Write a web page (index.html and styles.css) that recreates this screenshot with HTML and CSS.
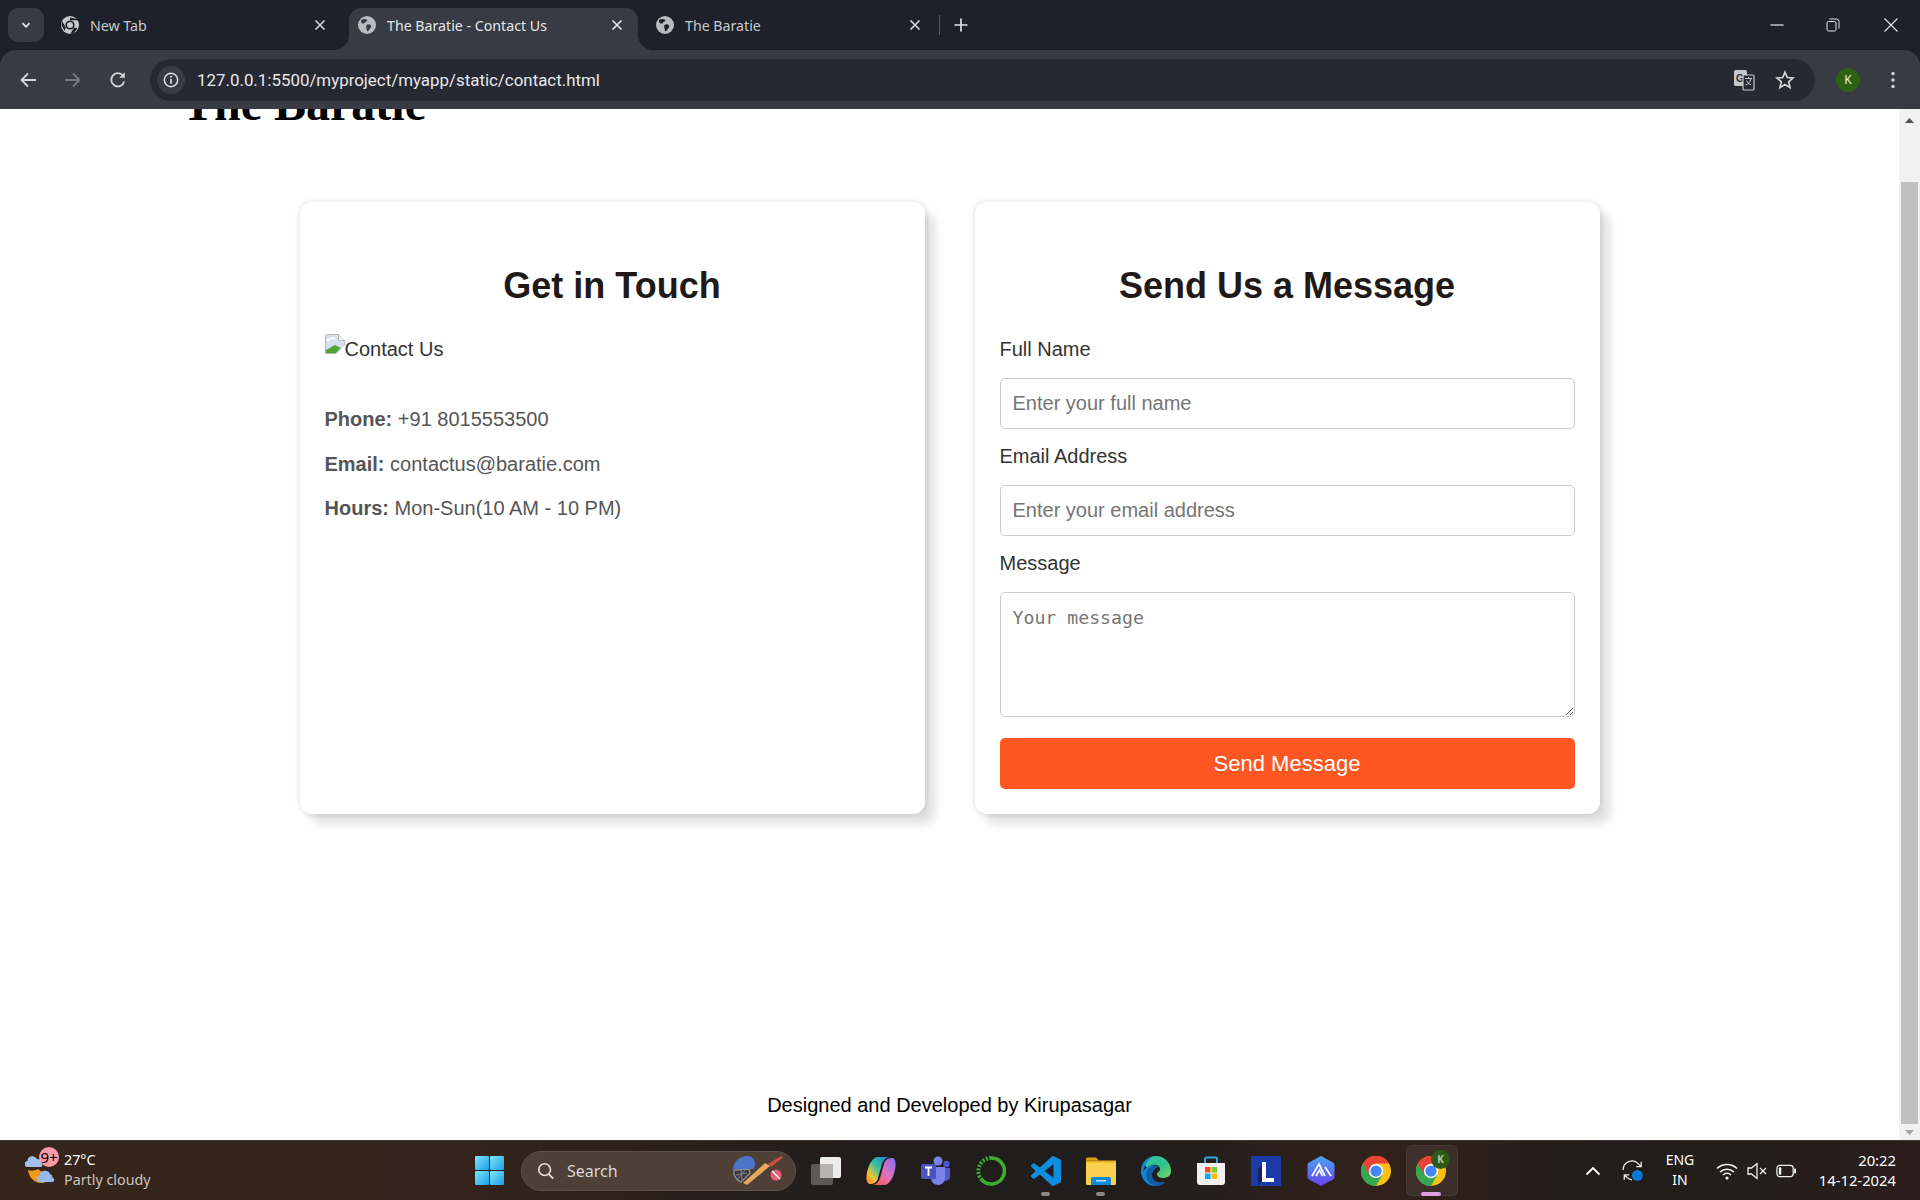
FILE: index.html
```html
<!DOCTYPE html>
<html lang="en">
<head>
<meta charset="utf-8">
<title>The Baratie - Contact Us</title>
<link rel="stylesheet" href="styles.css">
</head>
<body>
<div class="app">
  <header class="tabstrip">
    <div class="tab-search"><svg class="i12" viewBox="0 0 12 12"><path d="M2.5 4.2 6 7.8l3.5-3.6" fill="none" stroke="#e3e3e6" stroke-width="1.8"/></svg></div>
    <div class="tab">
      <svg class="favicon" viewBox="0 0 18 18"><circle cx="9" cy="9" r="9" fill="#c7c8cb"/><circle cx="9" cy="9" r="4.6" fill="#1e212a"/><circle cx="9" cy="9" r="3" fill="#c7c8cb"/><path d="M9 4.2h8L15.5 3 9 1.5zM4.8 11.4 1 5l-.6 4L3.6 15zM13.2 11.4 9.2 18l3.6-.8 3.6-5z" fill="#1e212a"/></svg>
      <span class="tab-title">New Tab</span>
      <svg class="tab-close" viewBox="0 0 12 12"><path d="M1.5 1.5l9 9M10.5 1.5l-9 9" stroke="#d8d9dc" stroke-width="1.6"/></svg>
    </div>
    <div class="tab active">
      <svg class="favicon" viewBox="0 0 18 18"><circle cx="9" cy="9" r="9" fill="#b9bbc0"/><path d="M3.2 3.8c2-.9 4.2-1 5.8 0 .8 1-.4 2.100-1.800 2.500-.6 1.200-1.800 1.500-2.900 1.200C3.300 6.800 2.500 5.500 3.200 3.800zM9.500 8.500c1.600-.5 3.200.2 3.700 1.500.4 1.500-.9 2.300-1.700 3.300-.5 1.400-1.600 2.300-2.500 1.600-.5-1.300-.2-2.400-.8-3.600-.3-1.100 0-2.200 1.300-2.800z" fill="#3a3d46"/></svg>
      <span class="tab-title">The Baratie - Contact Us</span>
      <svg class="tab-close" viewBox="0 0 12 12"><path d="M1.5 1.500l9 9M10.500 1.500l-9 9" stroke="#e6e7ea" stroke-width="1.600"/></svg>
    </div>
    <div class="tab">
      <svg class="favicon" viewBox="0 0 18 18"><circle cx="9" cy="9" r="9" fill="#b9bbc0"/><path d="M3.200 3.800c2-.9 4.200-1 5.800 0 .8 1-.4 2.100-1.800 2.500-.6 1.200-1.800 1.500-2.900 1.200C3.300 6.800 2.500 5.500 3.200 3.800zM9.500 8.500c1.600-.5 3.200.2 3.700 1.500.4 1.500-.9 2.300-1.700 3.300-.5 1.400-1.600 2.300-2.500 1.600-.5-1.300-.2-2.400-.8-3.600-.3-1.100 0-2.200 1.300-2.800z" fill="#1e212a"/></svg>
      <span class="tab-title">The Baratie</span>
      <svg class="tab-close" viewBox="0 0 12 12"><path d="M1.500 1.500l9 9M10.500 1.500l-9 9" stroke="#d8d9dc" stroke-width="1.600"/></svg>
    </div>
    <span class="tab-sep"></span>
    <svg class="new-tab" viewBox="0 0 14 14"><path d="M7 0.500v13M0.500 7h13" stroke="#e3e3e6" stroke-width="1.700"/></svg>
    <div class="win-controls">
      <svg class="win-min" viewBox="0 0 14 14"><path d="M0.500 7h13" stroke="#e6e6e8" stroke-width="1.200"/></svg>
      <svg class="win-max" viewBox="0 0 14 14"><rect x="1" y="3.500" width="9" height="9.500" rx="1.500" fill="none" stroke="#e6e6e8"/><path d="M3.500 1h7a2.500 2.500 0 0 1 2.500 2.500v7" fill="none" stroke="#e6e6e8"/></svg>
      <svg class="win-close" viewBox="0 0 14 14"><path d="M0.500 0.500l13 13M13.500 0.500l-13 13" stroke="#e6e6e8" stroke-width="1.100"/></svg>
    </div>
  </header>

  <nav class="toolbar">
    <svg class="nav-icon" viewBox="0 0 18 18"><path d="M17 9H2.500M9 2.500 2.500 9 9 15.500" fill="none" stroke="#d4d5d8" stroke-width="1.800"/></svg>
    <svg class="nav-icon" viewBox="0 0 18 18"><path d="M1 9h14.500M9 2.500 15.500 9 9 15.500" fill="none" stroke="#777980" stroke-width="1.800"/></svg>
    <svg class="nav-icon" viewBox="0 0 18 18"><path d="M15.200 10.500A6.600 6.600 0 1 1 14 4.700" fill="none" stroke="#d4d5d8" stroke-width="1.800"/><path d="M15.800 1.200v5.600h-5.600z" fill="#d4d5d8"/></svg>
    <div class="omnibox">
      <div class="info-chip"><svg class="i18" viewBox="0 0 18 18"><circle cx="9" cy="9" r="7.500" fill="none" stroke="#e3e3e6" stroke-width="1.600"/><path d="M9 8v5.200" stroke="#e3e3e6" stroke-width="1.800"/><circle cx="9" cy="5.400" r="1.100" fill="#e3e3e6"/></svg></div>
      <span class="url">127.0.0.1:5500/myproject/myapp/static/contact.html</span>
      <svg class="translate" viewBox="0 0 22 22"><rect x="1" y="1" width="13" height="16" rx="1.500" fill="#c6c7ca"/><text x="3" y="13" class="translate-g">G</text><rect x="10" y="6" width="11" height="15" rx="1" fill="#262932" stroke="#c6c7ca" stroke-width="1.200"/><path d="M12 9.500h7M15.500 8v1.500M18 10c-.8 3-2.800 5-5.500 6M13.500 11.500c1 2 2.500 3.500 4.500 4.500" fill="none" stroke="#c6c7ca"/></svg>
      <svg class="star" viewBox="0 0 20 20"><path d="M10 2.200l2.300 5.300 5.700.5-4.300 3.800 1.300 5.700L10 14.500l-5 3 1.300-5.700L2 8l5.700-.5z" fill="none" stroke="#d4d5d8" stroke-width="1.700"/></svg>
    </div>
    <div class="avatar">K</div>
    <svg class="menu" viewBox="0 0 4 18"><circle cx="2" cy="2.500" r="1.700" fill="#d4d5d8"/><circle cx="2" cy="9" r="1.700" fill="#d4d5d8"/><circle cx="2" cy="15.500" r="1.700" fill="#d4d5d8"/></svg>
  </nav>

  <div class="viewport">
    <div class="page">
      <h1 class="brand">The Baratie</h1>
      <main class="cards">
        <section class="card">
          <h2 class="card-title">Get in Touch</h2>
          <div class="alt-img">
            <svg class="broken" viewBox="0 0 20 20"><path d="M0.500 2.500a2 2 0 0 1 2-2h11l6 6V19.500H0.500z" fill="#d5e1f3" stroke="#b4b4b4"/><path d="M13.500 0.500v6h6" fill="#f4f4f4" stroke="#b4b4b4"/><path d="M1 19V16L10 11l6 3-5 5z" fill="#52a535"/><path d="M20 20H11l9-9z" fill="#fff"/><path d="M2.500 7c1.500-2.500 5-3.500 8-2" fill="none" stroke="#fff" stroke-width="2"/></svg>
            <span>Contact Us</span>
          </div>
          <p class="info"><strong>Phone:</strong> +91 8015553500</p>
          <p class="info"><strong>Email:</strong> contactus@baratie.com</p>
          <p class="info"><strong>Hours:</strong> Mon-Sun(10 AM - 10 PM)</p>
        </section>
        <section class="card">
          <h2 class="card-title">Send Us a Message</h2>
          <form class="form">
            <label class="field-label" for="name">Full Name</label>
            <input class="field" id="name" type="text" placeholder="Enter your full name">
            <label class="field-label" for="email">Email Address</label>
            <input class="field" id="email" type="email" placeholder="Enter your email address">
            <label class="field-label" for="message">Message</label>
            <textarea class="field area" id="message" placeholder="Your message"></textarea>
            <button class="send" type="button">Send Message</button>
          </form>
        </section>
      </main>
      <footer class="foot">Designed and Developed by Kirupasagar</footer>
    </div>
    <div class="scrollbar">
      <svg class="sb-arrow" viewBox="0 0 9 5"><path d="M4.500 0 9 5H0z" fill="#505050"/></svg>
      <div class="sb-thumb"></div>
      <svg class="sb-arrow" viewBox="0 0 9 5"><path d="M4.500 5 9 0H0z" fill="#a3a3a3"/></svg>
    </div>
  </div>

  <footer class="taskbar">
    <div class="weather">
      <div class="wx-icon">
        <svg class="wx-svg" viewBox="0 0 30 28"><path d="M3 15C4 23 10 28 16 28c4 0 7-2 9-5L13 14c-3 2-7 2-10 1z" fill="#f09a1e"/><path d="M3 12a3 3 0 0 1-.5-6 5 5 0 0 1 9.500-2 3.500 3.500 0 0 1 4 4 2.200 2.200 0 0 1 0 4z" fill="#a3bff0"/><path d="M15 27a3 3 0 0 1-.5-6 5.500 5.500 0 0 1 10.500-2 3.500 3.500 0 0 1 2.500 3.500 2.500 2.500 0 0 1 .5 4.500z" fill="#94b9ef"/></svg>
        <span class="wx-badge">9+</span>
      </div>
      <div class="wx-text"><span class="wx-temp">27°C</span><span class="wx-desc">Partly cloudy</span></div>
    </div>
    <svg class="start" viewBox="0 0 29 29"><defs><linearGradient id="w" x1="0" y1="0" x2="1" y2="1"><stop offset="0" stop-color="#7de6fb"/><stop offset="1" stop-color="#1a9fe8"/></linearGradient></defs><rect width="14" height="14" rx="1" fill="url(#w)"/><rect x="15" width="14" height="14" rx="1" fill="url(#w)"/><rect y="15" width="14" height="14" rx="1" fill="url(#w)"/><rect x="15" y="15" width="14" height="14" rx="1" fill="url(#w)"/></svg>
    <div class="search">
      <svg class="search-glass" viewBox="0 0 20 20"><circle cx="8.500" cy="8.500" r="6.500" fill="none" stroke="#e4e0dc" stroke-width="1.800"/><path d="M13 13.500l5 5" stroke="#e4e0dc" stroke-width="2"/></svg>
      <span class="search-text">Search</span>
      <svg class="search-art" viewBox="0 0 51 29"><path d="M2 14c-1 5 2 10 7 12l9-9-1-4z" fill="#3b3a3c" stroke="#8d939c" stroke-width="1.300"/><path d="M4 19l11-2M6 23l7-9M9 14l1 10" stroke="#8d939c" stroke-width=".8"/><path d="M1 13C2 5 8 0 15 0c5 0 8 3 8 8l-1 5z" fill="#4a74c9"/><path d="M11 27l4 2 23-19-5-3z" fill="#e8a860"/><path d="M36 8 49 0l2 1.500L39 11z" fill="#c94f3d"/><circle cx="44" cy="19" r="5.500" fill="#ea5f74"/><path d="M40 15l8 8" stroke="#fff" stroke-width="1.300"/></svg>
    </div>
    <div class="apps">
      <div class="app-icon"><svg class="app-svg" viewBox="0 0 30 30"><rect x="9" y="1" width="21" height="21" rx="2" fill="#ececec"/><rect x="0" y="8" width="22" height="21" rx="2" fill="#66645f" fill-opacity=".85"/><rect x="9" y="8" width="13" height="14" fill="#b5b3b0"/></svg></div>
      <div class="app-icon"><svg class="app-svg" viewBox="0 0 30 30"><defs><linearGradient id="cp1" x1="1" y1="0" x2="0" y2="1"><stop offset="0" stop-color="#1a7fe0"/><stop offset=".45" stop-color="#35c0a0"/><stop offset=".75" stop-color="#f7c32e"/><stop offset="1" stop-color="#f4783b"/></linearGradient><linearGradient id="cp2" x1="1" y1="0" x2="0" y2="1"><stop offset="0" stop-color="#7f6ff0"/><stop offset=".5" stop-color="#e36fc0"/><stop offset="1" stop-color="#f4553b"/></linearGradient></defs><path d="M12 1H23C19 2 17 5 16 8L12 22C11 26 8 28 4 28 1 28 0 24 .5 20 1 14 3 9 5 6 7 3 9 1 12 1z" fill="url(#cp1)"/><path d="M18 29H7C11 28 13 25 14 22L18 8C19 4 22 2 26 2 29 2 30 6 29.5 10 29 16 27 21 25 24 23 27 21 29 18 29z" fill="url(#cp2)"/></svg></div>
      <div class="app-icon"><svg class="app-svg" viewBox="0 0 30 30"><circle cx="17" cy="5" r="4.500" fill="#7b83eb"/><circle cx="25.500" cy="8" r="3.200" fill="#5059c9"/><path d="M21 12h8v9a5 5 0 0 1-8 3z" fill="#5059c9"/><path d="M10 11h14v11a7 7 0 0 1-14 0z" fill="#7b83eb"/><rect x="0" y="8" width="15" height="15" rx="1.500" fill="#4b53bc"/><path d="M4 11.500h7M7.500 11.500v8.500" stroke="#fff" stroke-width="1.800"/></svg></div>
      <div class="app-icon"><svg class="app-svg" viewBox="0 0 30 30"><path d="M15 2a13 13 0 1 1-9 22" fill="none" stroke="#3cae2c" stroke-width="3.600"/><path d="M6 24A13 13 0 0 1 15 2" fill="none" stroke="#3cae2c" stroke-width="4" stroke-dasharray="2 1.500"/></svg></div>
      <div class="app-icon"><svg class="app-svg" viewBox="0 0 24 24"><path d="M23.150 2.587 18.210.21a1.494 1.494 0 0 0-1.705.29l-9.460 8.630-4.120-3.128a.999.999 0 0 0-1.276.057L.327 7.261A1 1 0 0 0 .326 8.740L3.899 12 .326 15.260a1 1 0 0 0 .001 1.479L1.650 17.940a.999.999 0 0 0 1.276.057l4.120-3.128 9.460 8.630a1.492 1.492 0 0 0 1.704.29l4.942-2.377A1.500 1.500 0 0 0 24 20.060V3.939a1.500 1.500 0 0 0-.85-1.352zm-5.146 14.861L10.826 12l7.178-5.448v10.896z" fill="#0e8ee0"/></svg><span class="running"></span></div>
      <div class="app-icon"><svg class="app-svg" viewBox="0 0 30 30"><path d="M0 3a1.500 1.500 0 0 1 1.500-1.500H10l3 3H0z" fill="#dfa00f"/><rect x="0" y="5" width="30" height="24" rx="1.500" fill="#fbd04f"/><rect x="0" y="4.500" width="30" height="2" fill="#e9b01c"/><path d="M5 29v-6a2 2 0 0 1 2-2h16a2 2 0 0 1 2 2v6z" fill="#0f8ad8"/><rect x="10" y="24" width="10" height="1.500" fill="#bfe0f5"/></svg><span class="running"></span></div>
      <div class="app-icon"><svg class="app-svg" viewBox="0 0 30 30"><defs><linearGradient id="ed" x1="0" y1="0" x2="1" y2="1"><stop offset="0" stop-color="#34c6a0"/><stop offset=".55" stop-color="#2fc28e"/><stop offset="1" stop-color="#7dd957"/></linearGradient></defs><path d="M15 0a15 15 0 0 1 15 15c0 5-4 7-8 7-3 0-5-1-6-3-1-3 4-3 3-7-1-3-5-4-8-3C6 11 4 14 4 5 7 2 11 0 15 0z" fill="url(#ed)"/><path d="M15 0C6 0 0 7 0 15c0 8 6 15 14 15 4 0 7-1 10-4-6 2-13 0-13-7 0-4 3-7 6-8-3-3-12-2-15 5C4 7 9 0 15 0z" fill="#1087d6"/><path d="M17 11c-4 1-6 4-6 8 0 7 7 9 13 7-4 4-9 5-12 3-6-3-8-9-6-14 3-5 8-6 11-4z" fill="#0f5ba6"/></svg></div>
      <div class="app-icon"><svg class="app-svg" viewBox="0 0 30 30"><path d="M9 8V3a1.500 1.500 0 0 1 1.500-1.500h9A1.500 1.500 0 0 1 21 3v5" fill="none" stroke="#2ea7e0" stroke-width="2"/><path d="M1 7h28v19a3 3 0 0 1-3 3H4a3 3 0 0 1-3-3z" fill="#f0f0f0"/><rect x="9" y="11" width="5.500" height="5.500" fill="#f1511b"/><rect x="15.500" y="11" width="5.500" height="5.500" fill="#80cc28"/><rect x="9" y="17.500" width="5.500" height="5.500" fill="#00adef"/><rect x="15.500" y="17.500" width="5.500" height="5.500" fill="#fbbc09"/></svg></div>
      <div class="app-icon"><svg class="app-svg" viewBox="0 0 30 30"><rect width="30" height="30" fill="#1c3aa8"/><path d="M11 9v16L7 30V13z" fill="#13245f"/><path d="M11 6h4v16h8v4H11z" fill="#fff"/></svg></div>
      <div class="app-icon"><svg class="app-svg" viewBox="0 0 30 30"><defs><linearGradient id="hx" x1="0" y1="0" x2="0" y2="1"><stop offset="0" stop-color="#4aa6f0"/><stop offset="1" stop-color="#6a3ff0"/></linearGradient></defs><path d="M15 0 27 6.500c.8.5 1.500 1.500 1.500 2.500v12c0 1-.7 2-1.500 2.500L15 30 3 23.500C2.200 23 1.500 22 1.500 21V9C1.500 8 2.200 7 3 6.500z" fill="url(#hx)"/><path d="M6 20 13 8l6 12M19 11l6 9M10 20l3.500-6 3 6" fill="none" stroke="#fff" stroke-width="1.700"/></svg></div>
      <div class="app-icon"><svg class="app-svg" viewBox="0 0 48 48"><circle cx="24" cy="24" r="24" fill="#fbc116"/><path d="M3.200 12A24 24 0 0 0 24 48L34.400 30 24 24z" fill="#35a853"/><path d="M3.200 12A24 24 0 0 1 44.800 12H24L13.600 30z" fill="#ea4335"/><circle cx="24" cy="24" r="11.500" fill="#fff"/><circle cx="24" cy="24" r="9" fill="#4285f4"/></svg></div>
      <div class="app-icon active-app"><svg class="app-svg" viewBox="0 0 48 48"><circle cx="24" cy="24" r="24" fill="#fbc116"/><path d="M3.200 12A24 24 0 0 0 24 48L34.400 30 24 24z" fill="#35a853"/><path d="M3.200 12A24 24 0 0 1 44.800 12H24L13.600 30z" fill="#ea4335"/><circle cx="24" cy="24" r="11.500" fill="#fff"/><circle cx="24" cy="24" r="9" fill="#4285f4"/></svg><span class="profile-badge">K</span><span class="running pink"></span></div>
    </div>
    <div class="tray">
      <svg class="t-caret" viewBox="0 0 16 10"><path d="M1.500 8.500 8 2l6.500 6.500" fill="none" stroke="#fff" stroke-width="1.800"/></svg>
      <svg class="t-sync" viewBox="0 0 22 22"><path d="M2 10A8 8 0 0 1 16 4.500L18.500 7M18.500 2.500V7H14" fill="none" stroke="#e8e8e8" stroke-width="1.200"/><path d="M3 14.500 5.500 17A8 8 0 0 0 10 19M3 19v-4.500h4.500" fill="none" stroke="#e8e8e8" stroke-width="1.200"/><circle cx="15" cy="15" r="5" fill="#0a78d6"/></svg>
      <div class="t-lang"><span>ENG</span><span>IN</span></div>
      <svg class="t-wifi" viewBox="0 0 22 18"><path d="M1 6.500a14.500 14.500 0 0 1 20 0M4 10a10 10 0 0 1 14 0M7 13a5.500 5.500 0 0 1 8 0" fill="none" stroke="#f2f2f2" stroke-width="1.500"/><circle cx="11" cy="16" r="1.600" fill="#f2f2f2"/></svg>
      <svg class="t-sound" viewBox="0 0 20 18"><path d="M1 6h3.500L10 1.500v15L4.500 12H1z" fill="none" stroke="#f2f2f2" stroke-width="1.300"/><path d="M13 6l6 6M19 6l-6 6" stroke="#f2f2f2" stroke-width="1.300"/></svg>
      <svg class="t-batt" viewBox="0 0 22 14"><rect x="1" y="1" width="17" height="12" rx="3" fill="none" stroke="#f2f2f2" stroke-width="1.300"/><rect x="3" y="3" width="2.500" height="8" rx="1" fill="#f2f2f2"/><path d="M20 4.500v5" stroke="#f2f2f2" stroke-width="2"/></svg>
      <div class="clock"><span>20:22</span><span>14-12-2024</span></div>
    </div>
  </footer>
</div>
</body>
</html>
```
FILE: styles.css
```css
* { box-sizing: border-box; }
html, body { margin: 0; height: 100%; overflow: hidden; }
body { font-family: "Liberation Sans", Arial, sans-serif; background: #1e212a; }
.app { display: flex; flex-direction: column; width: 1920px; height: 1200px; }

/* tab strip */
.tabstrip { flex: 0 0 50px; display: flex; align-items: flex-end; background: #1e212a; padding-left: 8px; font-family: "Noto Sans", sans-serif; }
.tab-search { width: 36px; height: 34px; margin: 0 8px 8px 0; border-radius: 10px; background: #383b44; display: flex; align-items: center; justify-content: center; }
.i12 { width: 12px; height: 12px; }
.tab { position: relative; width: 289px; height: 42px; margin-right: 8px; padding: 0 15px 8px 9px; display: flex; align-items: center; border-radius: 12px 12px 0 0; color: #c7c8cc; font-size: 14.200px; }
.tab.active { margin-right: 9px; background: #383b44; color: #e6e7ea; }
.tab.active::before, .tab.active::after { content: ""; position: absolute; bottom: 0; width: 16px; height: 16px; }
.tab.active::before { left: -16px; background: radial-gradient(circle at 0 0, transparent 16px, #383b44 16.500px); }
.tab.active::after { right: -16px; background: radial-gradient(circle at 100% 0, transparent 16px, #383b44 16.500px); }
.favicon { width: 18px; height: 18px; flex: none; margin-right: 11px; }
.tab-title { flex: 1; white-space: nowrap; overflow: hidden; }
.tab-close { width: 12px; height: 12px; flex: none; }
.tab-sep { width: 1px; height: 20px; margin: 0 14px 15px -5px; background: #565962; }
.new-tab { width: 14px; height: 14px; margin-bottom: 18px; }
.win-controls { margin-left: auto; display: flex; align-items: center; align-self: stretch; padding-right: 22px; }
.win-min { width: 14px; height: 14px; margin-right: 42px; }
.win-max { width: 14px; height: 14px; margin-right: 44px; }
.win-close { width: 14px; height: 14px; }

/* toolbar */
.toolbar { flex: 0 0 59px; display: flex; align-items: center; background: #383b44; border-radius: 16px 16px 0 0; padding: 0 0 0 19px; }
.nav-icon { width: 18px; height: 18px; margin-right: 27px; }
.nav-icon:nth-child(3) { margin-right: 23px; }
.omnibox { width: 1665px; height: 42px; border-radius: 21px; background: #262932; display: flex; align-items: center; padding: 0 20px 0 7px; }
.info-chip { width: 28px; height: 28px; border-radius: 50%; background: #383b44; display: flex; align-items: center; justify-content: center; }
.i18 { width: 16px; height: 16px; }
.url { margin-left: 12px; color: #e6e7ea; font: 16.900px Roboto, sans-serif; flex: 1; }
.translate { width: 22px; height: 22px; margin-right: 20px; }
.translate-g { font: bold 10px "Liberation Sans", sans-serif; fill: #2a2c33; }
.star { width: 20px; height: 20px; }
.avatar { width: 24px; height: 24px; margin-left: 21px; border-radius: 50%; background: #2f6314; color: #e6eedf; font: 12px "Noto Sans", sans-serif; display: flex; align-items: center; justify-content: center; }
.menu { width: 4px; height: 18px; margin-left: 31px; }

/* page viewport */
.viewport { flex: 0 0 1031px; display: flex; overflow: hidden; background: #fff; }
.page { flex: 1; min-width: 0; display: flex; flex-direction: column; align-items: center; }
.brand { align-self: flex-start; margin: -32px 0 0 182px; font: bold 48px/54px "Liberation Serif", serif; color: #000; }
.cards { display: flex; gap: 50px; margin-top: 71px; }
.card { width: 625px; height: 612px; padding: 25px; background: #fff; border-radius: 12px; box-shadow: 0 0 6px rgba(0, 0, 0, .14), 10px 10px 10px rgba(0, 0, 0, .12); color: #333; }
.card-title { margin: 39px 0 32px; font-size: 36px; line-height: 40px; text-align: center; color: #1f1a17; }
.alt-img { display: flex; align-items: flex-start; font-size: 20px; line-height: 23px; height: 70px; }
.broken { width: 20px; height: 20px; flex: none; margin-top: -4px; }
.info { margin: 0 0 21.700px; font-size: 20px; line-height: 23px; color: #555; }
.form { display: flex; flex-direction: column; }
.field-label { font-size: 20px; line-height: 23px; margin-bottom: 16.500px; color: #333; }
.field { height: 51px; margin-bottom: 16.500px; padding: 12px; border: 1px solid #ccc; border-radius: 5px; font: 20px "Liberation Sans", sans-serif; outline: none; }
.field::placeholder { color: #757575; }
.area { height: 125px; margin-bottom: 21.500px; padding-top: 14px; font: 18.200px "DejaVu Sans Mono", monospace; resize: vertical; }
.send { height: 51px; border: 0; border-radius: 5px; background: #ff5722; color: #fff; font: 22px "Liberation Sans", sans-serif; }
.foot { margin-top: auto; margin-bottom: 23px; font-size: 20px; line-height: 23px; color: #000; }

/* scrollbar */
.scrollbar { flex: 0 0 21px; display: flex; flex-direction: column; align-items: center; background: #f1f1f1; padding: 9px 0 5px; }
.sb-arrow { width: 9px; height: 5px; flex: none; }
.sb-thumb { width: 17px; flex: 1; margin: 59px 0 6px; background: #c1c1c1; }

/* taskbar */
.taskbar { flex: 0 0 60px; display: flex; align-items: center; border-top: 1px solid #3a3733; background: linear-gradient(90deg, #36251a 0, #33231a 25%, #211d1c 45%, #201d1d 58%, #32211a 72%, #211d1c 84%, #2a1e1c 100%); font-family: "Noto Sans", sans-serif; color: #fff; }
.weather { width: 475px; padding-left: 25px; display: flex; align-items: center; }
.wx-icon { position: relative; width: 30px; height: 28px; margin-top: -3px; }
.wx-svg { display: block; width: 30px; height: 28px; }
.wx-badge { position: absolute; left: 14px; top: -8px; width: 20px; height: 20px; border-radius: 50%; background: #fa9aa6; color: #000; font-size: 15px; line-height: 20px; text-align: center; }
.wx-text { display: flex; flex-direction: column; margin: 0 0 2px 9px; font-size: 14.300px; line-height: 20px; }
.wx-desc { color: #c9c5c1; }
.start { width: 29px; height: 29px; margin-right: 17px; }
.search { width: 275px; height: 40px; border-radius: 20px; background: #4e4037; border: 1px solid #5e5148; display: flex; align-items: center; padding-left: 15px; }
.search-glass { width: 18px; height: 18px; }
.search-text { margin-left: 12px; font-size: 16px; color: #d9d5d1; flex: 1; }
.search-art { width: 51px; height: 29px; margin-right: 12px; }
.apps { display: flex; gap: 25px; margin-left: 15px; }
.app-icon { position: relative; width: 30px; height: 30px; }
.app-svg { display: block; position: relative; width: 30px; height: 30px; }
.active-app::before { content: ""; position: absolute; left: -10px; top: -11px; width: 50px; height: 49px; border-radius: 6px; background: rgba(255, 255, 255, .07); border: 1px solid rgba(255, 255, 255, .05); }
.running { position: absolute; left: 10px; bottom: -10px; width: 9px; height: 4px; border-radius: 2px; background: #8a8886; }
.running.pink { left: 5px; width: 20px; background: #dd9fe0; }
.profile-badge { position: absolute; left: 15px; top: -6px; width: 19px; height: 19px; border-radius: 50%; background: #2e5a17; color: #b6c9a8; font-size: 10px; line-height: 19px; text-align: center; font-weight: 700; }
.tray { display: flex; align-items: center; flex: 1; margin-left: 139px; padding-right: 24px; }
.t-caret { width: 16px; height: 10px; }
.t-sync { width: 24px; height: 24px; margin-left: 20px; }
.t-lang { display: flex; flex-direction: column; align-items: center; width: 30px; margin: 0 0 2px 20px; font-size: 14px; line-height: 20px; }
.t-wifi { width: 22px; height: 18px; margin-left: 21px; }
.t-sound { width: 20px; height: 18px; margin-left: 9px; }
.t-batt { width: 21px; height: 14px; margin-left: 9px; }
.clock { display: flex; flex-direction: column; align-items: flex-end; margin: 0 0 2px auto; font-size: 14.800px; line-height: 20px; }
```
